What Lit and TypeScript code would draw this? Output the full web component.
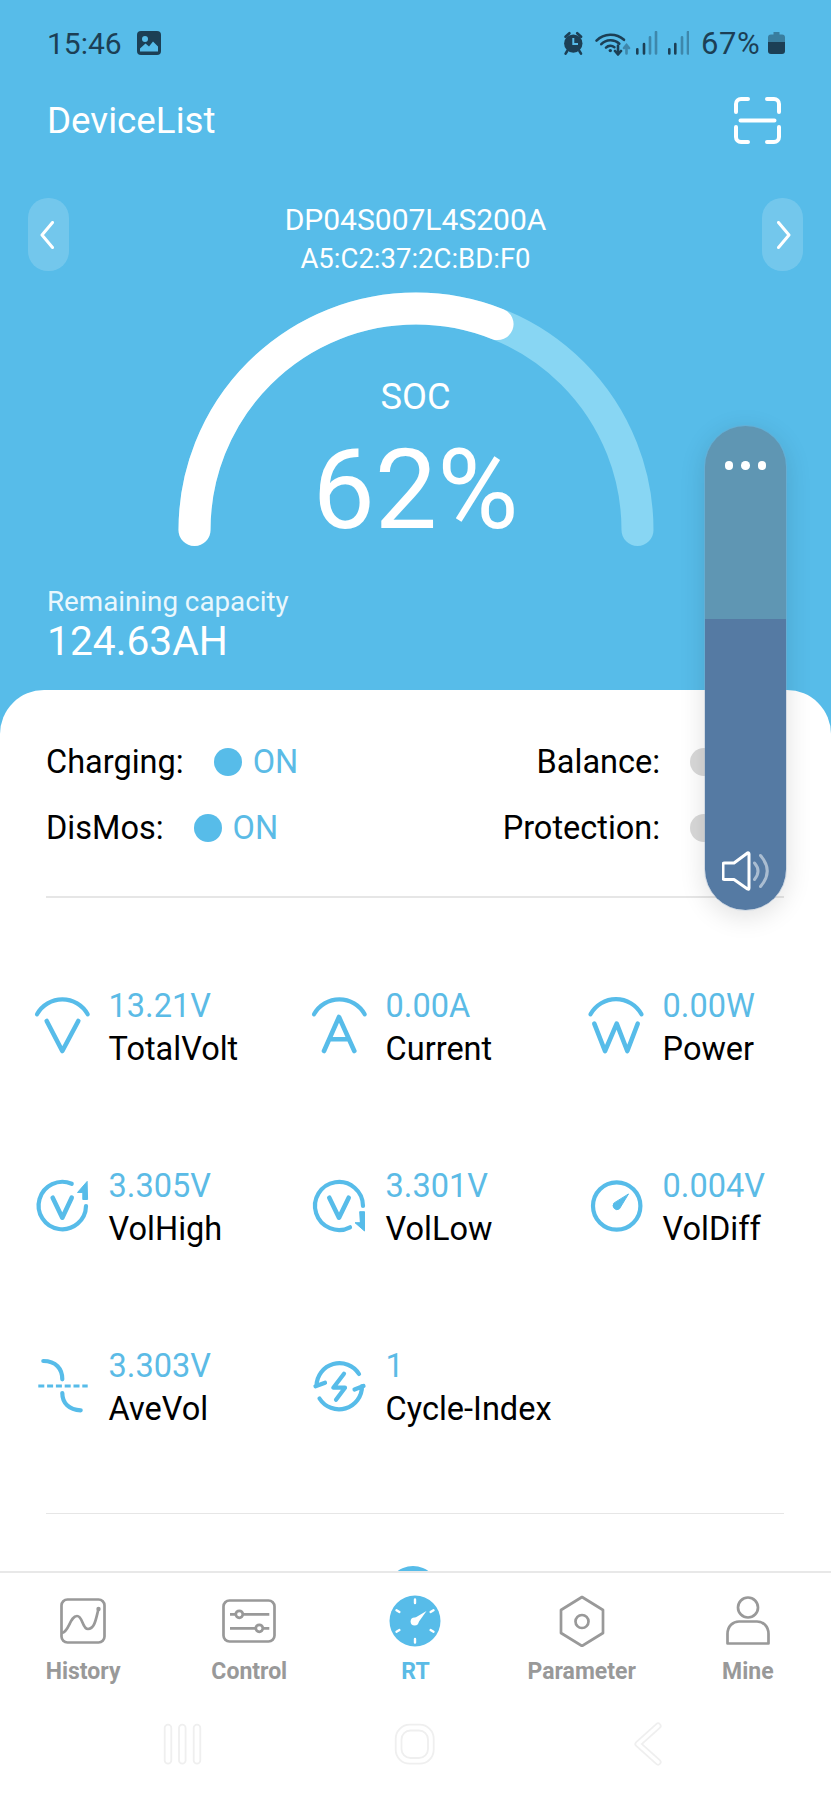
import { css, html, LitElement } from 'lit'
import { customElement } from 'lit/decorators.js'

const arc = 'M5 17.3 A29 29 0 0 1 55.7 17.3'

const metricIcons = {
  total: html`<svg viewBox="0 0 60 60"><path class="thin" d="${arc}" /><path d="M14.7 24 L30.3 54 L46.3 24" /></svg>`,
  current: html`<svg viewBox="0 0 60 60"><path class="thin" d="${arc}" /><path d="M15 54 L30 20 L45.3 54 M20.5 42.3 H39.8" /></svg>`,
  power: html`<svg viewBox="0 0 60 60"><path class="thin" d="M4.5 17.3 A29 29 0 0 1 55.5 17.3" /><path d="M8.3 26.7 L19 54 L30.7 26.7 L41.3 54 L51.7 26.7" /></svg>`,
  high: html`<svg viewBox="0 0 60 60">
    <path class="thin" d="M39.7 6.8 A23.7 23.7 0 1 0 54 29" />
    <path d="M20.7 20.7 L30.3 40.7 L39.7 20.7" />
    <path class="solid" d="M54.9 4.7 L45.5 15.5 L50.8 15.5 L50.8 22.5 L55.2 22.5 Z" />
  </svg>`,
  low: html`<svg viewBox="0 0 60 60">
    <path class="thin" d="M54 29 A24 24 0 1 0 41 50.3" />
    <path d="M20.3 20.7 L30 40.7 L39.7 20.7" />
    <path class="solid" d="M51 34.7 L55.5 34.7 L55.5 54 L46 45.7 L51 45.7 Z" />
  </svg>`,
  diff: html`<svg viewBox="0 0 60 60">
    <circle class="thin" cx="30.7" cy="29" r="23.7" />
    <path class="solid" d="M42.3 17.3 L33.5 31.8 A4 4 0 0 1 27.9 26.2 Z" />
  </svg>`,
  ave: html`<svg viewBox="0 0 60 60">
    <path class="thin" d="M11.3 4 C24 4 30.3 12 30.3 22.3" />
    <path class="thin" d="M30.3 36 C30.3 46 37 53 48.7 53.3" />
    <path class="dash" d="M6.3 29 H55.7" />
  </svg>`,
  cycle: html`<svg viewBox="0 0 60 60">
    <path class="thin" d="M7.5 29 A23 23 0 0 1 50 17 M16 25.7 L6.5 29.3" />
    <path class="thin" d="M53 29 A23 23 0 0 1 10.5 41.5 M45.5 32.5 L54.5 29" />
    <path class="thin" d="M35 16.7 L24.3 30.7 L36 30.7 L27 42.7" />
  </svg>`,
}

const metrics = [
  { value: '13.21V', label: 'TotalVolt', icon: metricIcons.total },
  { value: '0.00A', label: 'Current', icon: metricIcons.current },
  { value: '0.00W', label: 'Power', icon: metricIcons.power },
  { value: '3.305V', label: 'VolHigh', icon: metricIcons.high },
  { value: '3.301V', label: 'VolLow', icon: metricIcons.low },
  { value: '0.004V', label: 'VolDiff', icon: metricIcons.diff },
  { value: '3.303V', label: 'AveVol', icon: metricIcons.ave },
  { value: '1', label: 'Cycle-Index', icon: metricIcons.cycle },
]

const tabs = [
  {
    label: 'History',
    active: false,
    icon: html`<svg width="46" height="46" viewBox="0 0 46 46">
      <rect x="1.5" y="1.5" width="43" height="43" rx="6" />
      <path d="M2 35 C9 34 10 18 17 18 C23 18 22 31 28 31 C35 31 36 20 38.5 11" />
      <circle class="fill" cx="38.5" cy="11" r="2.2" />
    </svg>`,
  },
  {
    label: 'Control',
    active: false,
    icon: html`<svg width="54" height="46" viewBox="0 0 54 46">
      <rect x="1.5" y="2.5" width="51" height="41" rx="6" />
      <path d="M8 16.3 H13.8 M20.8 16.3 H47.3 M8 30.3 H33.8 M40.8 30.3 H47.3" />
      <circle cx="17.3" cy="16.3" r="3.5" />
      <circle cx="37.3" cy="30.3" r="3.5" />
    </svg>`,
  },
  {
    label: 'RT',
    active: true,
    icon: html`<svg width="52" height="52" viewBox="0 0 52 52">
      <circle class="disc" cx="26" cy="26" r="25.5" />
      <path class="tick" d="M26 4.5 V8 M26 44 V47.5 M7.5 15.3 L10.4 17 M44.5 15.3 L41.6 17 M7.5 36.7 L10.4 35 M44.5 36.7 L41.6 35" />
      <circle class="hub" cx="25.6" cy="26.6" r="4" />
      <path class="needle" d="M37.5 16 L28.6 28.6 L23.2 24.4 Z" />
    </svg>`,
  },
  {
    label: 'Parameter',
    active: false,
    icon: html`<svg width="48" height="52" viewBox="0 0 48 52">
      <path d="M24 2 L45 15 V38 L24 51 L3 38 V15 Z" />
      <circle cx="24" cy="26.5" r="6.5" />
    </svg>`,
  },
  {
    label: 'Mine',
    active: false,
    icon: html`<svg width="48" height="52" viewBox="0 0 48 52">
      <circle cx="24" cy="12.5" r="10" />
      <path d="M3.5 48.5 V39 C3.5 31 9 26.5 15 26.5 H33 C39 26.5 44.5 31 44.5 39 V48.5 Z" />
    </svg>`,
  },
]

@customElement('app-root')
export class AppRoot extends LitElement {
  private renderStatusIcons() {
    return html`<svg class="status-icons" width="127" height="25" viewBox="0 0 127 25">
      <circle class="d" cx="11.3" cy="12.6" r="9.2" />
      <path class="ds" d="M3.5 5.8 L7.4 2.2 M19.1 5.8 L15.2 2.2 M5.2 20 L3.6 22.6 M17.4 20 L19 22.6" />
      <path class="cut" d="M11.3 7 V13 H16" />
      <g class="ds" fill="none">
        <path d="M34.5 9.6 A20 20 0 0 1 62 8.8" />
        <path d="M39.3 13.2 A13 13 0 0 1 57.3 12.6" />
        <path d="M44 16.6 A6.5 6.5 0 0 1 52.4 16.2" />
      </g>
      <circle class="d" cx="48.3" cy="19.6" r="1.7" />
      <path class="ds" d="M56 14.5 V23 M53 20 L56 23.5 L59 20" />
      <path class="dim" d="M64.5 22.5 V15 M62 17 L64.5 14 L67 17" />
      <path class="ds" d="M75.3 22.5 V18.3 M82 22.5 V13" />
      <path class="dim" d="M88 22.5 V6.3 M94 22.5 V1" />
      <path class="ds" d="M107.3 22.5 V18.3 M113.3 22.5 V13" />
      <path class="dim" d="M120 22.5 V6.3 M126 22.5 V1" />
    </svg>`
  }

  private renderNavBar() {
    return html`<svg class="nav" width="831" height="50" viewBox="0 0 831 50">
      <rect x="164.7" y="5.7" width="6.6" height="39" rx="3.3" />
      <rect x="179" y="5.7" width="6.6" height="39" rx="3.3" />
      <rect x="193.7" y="5.7" width="6.6" height="39" rx="3.3" />
      <rect x="395.7" y="5.7" width="38" height="39" rx="14" />
      <rect x="401.5" y="11.5" width="26.5" height="27.5" rx="9" />
      <path class="back-o" d="M658 7 L638 25 L658 43" />
      <path class="back-i" d="M658 7 L638 25 L658 43" />
    </svg>`
  }

  render() {
    return html`
      <div class="screen">
        <section class="hero">
          <div class="status">
            <div class="status-left">
              <span>15:46</span>
              <svg width="24" height="24" viewBox="0 0 24 24">
                <rect class="d" width="24" height="24" rx="4" />
                <circle class="hole" cx="8" cy="8" r="3" />
                <path class="hole" d="M3 20.5 V17.5 L8.5 12.5 L12 15.5 L16 10.5 L21 15.5 V20.5 Z" />
              </svg>
            </div>
            <div class="status-right">
              ${this.renderStatusIcons()}
              <span class="pct">67%</span>
              <svg width="17" height="24" viewBox="0 0 17 24">
                <path class="batt-top" d="M5.5 1 H11.5 V3.5 H14 A3 3 0 0 1 17 6.5 V11 H0 V6.5 A3 3 0 0 1 3 3.5 H5.5 Z" />
                <path class="d" d="M0 11 H17 V20 A3 3 0 0 1 14 23 H3 A3 3 0 0 1 0 20 Z" />
              </svg>
            </div>
          </div>

          <div class="title-row">
            <span class="title">DeviceList</span>
            <svg width="47" height="47" viewBox="0 0 47 47" class="scan">
              <path d="M2 15 V7 A5 5 0 0 1 7 2 H14 M33 2 H40 A5 5 0 0 1 45 7 V15 M2 30 V40 A5 5 0 0 0 7 45 H14 M33 45 H40 A5 5 0 0 0 45 40 V30 M6.5 23.5 H40.5" />
            </svg>
          </div>

          <div class="device-row">
            <div class="nav-btn">
              <svg class="chev-left" width="14" height="28" viewBox="0 0 14 28"><path d="M12.5 1.5 L2 14 L12.5 26.5" /></svg>
            </div>
            <div class="device">
              <div class="device-name">DP04S007L4S200A</div>
              <div class="device-mac">A5:C2:37:2C:BD:F0</div>
            </div>
            <div class="nav-btn">
              <svg class="chev-right" width="14" height="28" viewBox="0 0 14 28"><path d="M1.5 1.5 L12 14 L1.5 26.5" /></svg>
            </div>
          </div>

          <div class="gauge">
            <svg width="480" height="258" viewBox="0 0 480 258">
              <path class="track" pathLength="100" d="M18.5 240 A221.5 221.5 0 0 1 461.5 240" />
              <path class="fill-arc" pathLength="100" stroke-dasharray="62 100" d="M18.5 240 A221.5 221.5 0 0 1 461.5 240" />
            </svg>
            <div class="gauge-text">
              <div class="soc-label">SOC</div>
              <div class="soc-value">62%</div>
            </div>
          </div>

          <div class="capacity">
            <div class="capacity-label">Remaining capacity</div>
            <div class="capacity-value">124.63AH</div>
          </div>
        </section>

        <section class="panel">
          <div class="flags">
            <div class="flag-row">
              <div class="flag"><span>Charging:</span><i class="dot on"></i><span class="on-text">ON</span></div>
              <div class="flag"><span>Balance:</span><i class="dot"></i><span class="off-text">OFF</span></div>
            </div>
            <div class="flag-row">
              <div class="flag"><span>DisMos:</span><i class="dot on"></i><span class="on-text">ON</span></div>
              <div class="flag"><span>Protection:</span><i class="dot"></i><span class="off-text">OFF</span></div>
            </div>
          </div>
          <div class="rule first"></div>
          <div class="metrics">
            ${metrics.map(
              (m) => html`<div class="metric">
                <div class="metric-icon">${m.icon}</div>
                <div class="metric-text">
                  <div class="metric-value">${m.value}</div>
                  <div class="metric-label">${m.label}</div>
                </div>
              </div>`,
            )}
          </div>
          <div class="rule second"></div>
          <div class="next-dot"></div>
        </section>

        <footer class="tabbar">
          <div class="tabs">
            ${tabs.map(
              (t) => html`<div class="tab ${t.active ? 'active' : ''}">
                <div class="tab-icon">${t.icon}</div>
                <div class="tab-label">${t.label}</div>
              </div>`,
            )}
          </div>
          ${this.renderNavBar()}
        </footer>

        <aside class="volume">
          <div class="volume-top">
            <div class="dots"><i></i><i></i><i></i></div>
          </div>
          <div class="volume-bottom">
            <svg width="48" height="42" viewBox="0 0 48 42">
              <path class="horn" d="M2.5 12 H12 L25.5 2 Q27 1.4 27 3 V37 Q27 38.8 25.5 38 L12 28.5 H2.5 Q1 28.5 1 27 V13.5 Q1 12 2.5 12 Z" />
              <path class="wave" d="M32.5 12 Q39.5 20 32.5 28.5 M38.5 4.5 Q52 20 38.5 35.5" />
            </svg>
          </div>
        </aside>
      </div>
    `
  }

  static styles = css`
    :host {
      display: block;
      width: 831px;
      height: 1801px;
      font-family: Roboto, 'Liberation Sans', sans-serif;
      --blue: #57bce9;
      --text-blue: #5bbbe6;
      --dark: #1c3f55;
    }

    .screen {
      position: relative;
      display: flex;
      flex-direction: column;
      height: 1801px;
      overflow: hidden;
      background: var(--blue);
    }

    .hero {
      height: 690px;
      flex-shrink: 0;
      color: #fff;
    }

    .status {
      display: flex;
      align-items: center;
      justify-content: space-between;
      height: 86px;
      padding: 0 46px 0 47px;
      font-size: 30px;
      color: var(--dark);
    }

    .status-left {
      display: flex;
      align-items: center;
      gap: 15px;
    }

    .status-right {
      display: flex;
      align-items: center;
    }

    .status-icons {
      margin-right: 12px;
    }

    .pct {
      width: 61px;
      margin-right: 6px;
      font-size: 31px;
      letter-spacing: 0.6px;
      white-space: nowrap;
    }

    .d {
      fill: var(--dark);
    }

    .ds {
      stroke: var(--dark);
      stroke-width: 2.6;
      fill: none;
      stroke-linecap: round;
      stroke-linejoin: round;
    }

    .dim {
      stroke: var(--dark);
      stroke-opacity: 0.42;
      stroke-width: 2.6;
      fill: none;
      stroke-linecap: round;
    }

    .cut {
      stroke: var(--blue);
      stroke-width: 2;
      fill: none;
    }

    .hole {
      fill: var(--blue);
    }

    .batt-top {
      fill: var(--dark);
      fill-opacity: 0.5;
    }

    .title-row {
      display: flex;
      align-items: center;
      justify-content: space-between;
      height: 68px;
      padding: 0 50px 0 47px;
    }

    .title {
      font-size: 36.75px;
    }

    .scan path {
      fill: none;
      stroke: #fff;
      stroke-width: 4;
      stroke-linecap: round;
    }

    .device-row {
      display: flex;
      justify-content: space-between;
      align-items: flex-start;
      height: 81px;
      margin-top: 44px;
      padding: 0 28px;
    }

    .nav-btn {
      display: flex;
      align-items: center;
      justify-content: center;
      width: 41px;
      height: 73px;
      border-radius: 20px;
      background: rgba(255, 255, 255, 0.17);
    }

    .chev-left {
      margin-right: 3px;
    }

    .chev-right {
      margin-left: 3px;
    }

    .nav-btn path {
      fill: none;
      stroke: #fff;
      stroke-width: 3;
      stroke-linecap: round;
      stroke-linejoin: round;
    }

    .device {
      text-align: center;
      padding-top: 2px;
    }

    .device-name {
      font-size: 30px;
      line-height: 39px;
    }

    .device-mac {
      font-size: 27.5px;
      line-height: 39px;
    }

    .gauge {
      display: grid;
      justify-items: center;
      margin-top: 11px;
      height: 258px;
    }

    .gauge > * {
      grid-area: 1 / 1;
    }

    .gauge path {
      fill: none;
      stroke-width: 32;
      stroke-linecap: round;
    }

    .track {
      stroke: #88d6f3;
    }

    .fill-arc {
      stroke: #fff;
    }

    .gauge-text {
      text-align: center;
      padding-top: 83px;
    }

    .soc-label {
      font-size: 36.25px;
      line-height: 48px;
    }

    .soc-value {
      font-size: 111px;
      line-height: 118px;
      font-weight: 400;
      margin-top: 10px;
    }

    .capacity {
      margin-top: 36px;
      padding-left: 47px;
    }

    .capacity-label {
      font-size: 27.75px;
      line-height: 36px;
      color: #e9f7fd;
    }

    .capacity-value {
      font-size: 40.75px;
      line-height: 43px;
    }

    .panel {
      flex: 1;
      min-height: 0;
      overflow: hidden;
      background: #fff;
      border-radius: 44px 44px 0 0;
    }

    .flags {
      padding: 39px 48px 0 46px;
      color: #000;
      font-size: 32.5px;
    }

    .flag-row {
      display: flex;
      justify-content: space-between;
      height: 66px;
    }

    .flag {
      display: flex;
      align-items: center;
      height: 66px;
    }

    .dot {
      width: 28px;
      height: 28px;
      margin: 0 11px 0 30px;
      border-radius: 50%;
      background: #d9d9d9;
    }

    .dot.on {
      background: var(--blue);
    }

    .on-text {
      color: var(--text-blue);
    }

    .off-text {
      font-size: 30px;
      color: #999;
    }

    .rule {
      height: 1.5px;
      margin: 0 47px 0 46px;
      background: #e6e6e6;
    }

    .rule.first {
      margin-top: 35px;
    }

    .rule.second {
      margin-top: 36px;
    }

    .metrics {
      display: grid;
      grid-template-columns: repeat(3, 277px);
      grid-auto-rows: 180px;
      padding: 39px 0 0 32px;
    }

    .metric {
      display: flex;
      align-items: center;
      gap: 16.6px;
    }

    .metric-text {
      padding-top: 2px;
    }

    .metric-icon {
      width: 60px;
      height: 60px;
    }

    .metric-icon svg {
      display: block;
      width: 60px;
      height: 60px;
      overflow: visible;
    }

    .metric-icon path,
    .metric-icon circle {
      fill: none;
      stroke: var(--blue);
      stroke-width: 4.6;
      stroke-linecap: round;
      stroke-linejoin: round;
    }

    .metric-icon .thin {
      stroke-width: 4.2;
    }

    .metric-icon .solid {
      fill: var(--blue);
      stroke: var(--blue);
      stroke-width: 1;
    }

    .metric-icon .dash {
      stroke-width: 3;
      stroke-linecap: butt;
      stroke-dasharray: 6 2.8;
    }

    .metric-value {
      font-size: 32.5px;
      line-height: 43px;
      color: var(--text-blue);
    }

    .metric-label {
      font-size: 32.5px;
      line-height: 43px;
      color: #000;
    }

    .next-dot {
      width: 52px;
      height: 52px;
      margin: 52px 0 0 387px;
      border-radius: 50%;
      background: var(--blue);
    }

    .tabbar {
      height: 230px;
      flex-shrink: 0;
      box-sizing: border-box;
      border-top: 2px solid #e8e8e8;
      background: #fff;
    }

    .tabs {
      display: grid;
      grid-template-columns: repeat(5, 1fr);
      padding-top: 22px;
    }

    .tab {
      display: flex;
      flex-direction: column;
      align-items: center;
      color: #999;
    }

    .tab.active {
      color: var(--text-blue);
    }

    .tab-icon {
      display: flex;
      align-items: center;
      height: 52px;
    }

    .tab-icon svg {
      display: block;
    }

    .tab-icon path,
    .tab-icon rect,
    .tab-icon circle {
      fill: none;
      stroke: #999;
      stroke-width: 2.7;
      stroke-linejoin: round;
    }

    .tab-icon .fill {
      fill: #999;
      stroke: none;
    }

    .tab-icon .disc {
      fill: var(--blue);
      stroke: none;
    }

    .tab-icon .tick {
      stroke: #fff;
      stroke-width: 2.4;
      stroke-linecap: round;
    }

    .tab-icon .hub,
    .tab-icon .needle {
      fill: #fff;
      stroke: none;
    }

    .tab-label {
      margin-top: 9px;
      font-size: 23px;
      line-height: 32px;
      font-weight: 700;
    }

    .nav {
      display: block;
      margin-top: 31px;
    }

    .nav rect {
      fill: none;
      stroke: #efefef;
      stroke-width: 1.8;
    }

    .back-o {
      fill: none;
      stroke: #efefef;
      stroke-width: 7;
      stroke-linecap: round;
      stroke-linejoin: round;
    }

    .back-i {
      fill: none;
      stroke: #fff;
      stroke-width: 3.6;
      stroke-linecap: round;
      stroke-linejoin: round;
    }

    /* floating volume slider, sits over the hero and the panel */
    .volume {
      position: absolute;
      top: 425px;
      left: 704px;
      display: flex;
      flex-direction: column;
      box-sizing: border-box;
      width: 83px;
      height: 486px;
      overflow: hidden;
      border: 1.5px solid rgba(125, 150, 175, 0.35);
      border-radius: 42px;
      background-clip: padding-box;
      box-shadow: 0 6px 26px rgba(0, 0, 0, 0.12);
    }

    .volume-top {
      height: 193px;
      background: #5f96b3;
    }

    .dots {
      display: flex;
      justify-content: center;
      gap: 8px;
      padding-top: 35px;
    }

    .dots i {
      width: 8.5px;
      height: 8.5px;
      border-radius: 50%;
      background: #fff;
    }

    .volume-bottom {
      flex: 1;
      display: flex;
      align-items: flex-end;
      justify-content: flex-start;
      padding: 0 0 17px 17px;
      background: #557aa3;
    }

    .horn {
      fill: none;
      stroke: #fff;
      stroke-width: 3;
      stroke-linejoin: round;
    }

    .wave {
      fill: none;
      stroke: rgba(255, 255, 255, 0.5);
      stroke-width: 3;
      stroke-linecap: round;
    }
  `
}

declare global {
  interface HTMLElementTagNameMap {
    'app-root': AppRoot
  }
}
